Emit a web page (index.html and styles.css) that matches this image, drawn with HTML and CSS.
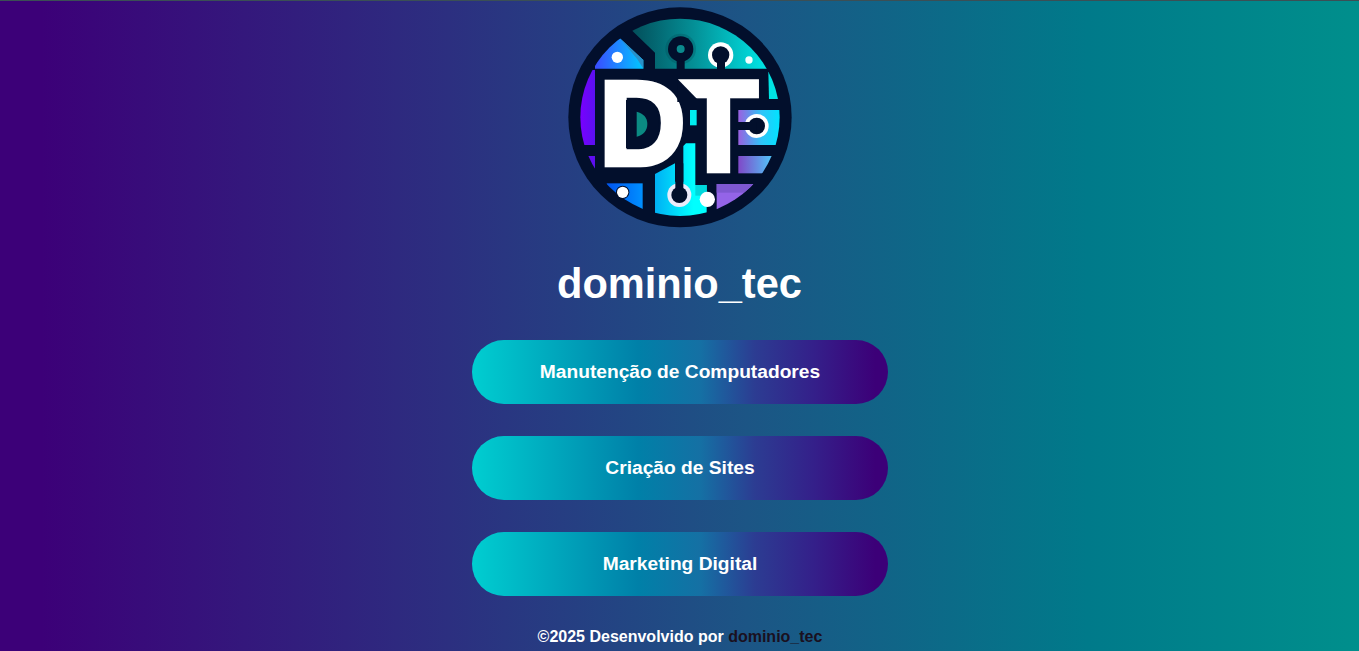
FILE: index.html
```html
<!DOCTYPE html>
<html lang="pt-BR">
<head>
  <meta charset="UTF-8" />
  <meta name="viewport" content="width=device-width, initial-scale=1.0" />
  <title>dominio_tec</title>
  <link rel="stylesheet" href="styles.css">
</head>
<body>
  <main class="page">
    <svg class="logo" viewBox="0 3 720 702" role="img" aria-label="Logo dominio_tec">
      <defs>
        <clipPath id="inner"><ellipse cx="360" cy="352" rx="299" ry="296" /></clipPath>
        <linearGradient id="tealTop" x1="220" x2="620" y1="0" y2="0" gradientUnits="userSpaceOnUse">
          <stop offset="0" stop-color="#03505c" />
          <stop offset="0.45" stop-color="#048f96" />
          <stop offset="1" stop-color="#00e6e6" />
        </linearGradient>
        <linearGradient id="house" x1="105" x2="250" y1="0" y2="0" gradientUnits="userSpaceOnUse">
          <stop offset="0" stop-color="#3a4cff" />
          <stop offset="1" stop-color="#00c8ff" />
        </linearGradient>
        <linearGradient id="violet" x1="60" x2="105" y1="0" y2="0" gradientUnits="userSpaceOnUse">
          <stop offset="0" stop-color="#7a00ff" />
          <stop offset="1" stop-color="#5a10f0" />
        </linearGradient>
        <linearGradient id="blue" x1="148" x2="248" y1="0" y2="0" gradientUnits="userSpaceOnUse">
          <stop offset="0" stop-color="#0058f0" />
          <stop offset="1" stop-color="#0090ff" />
        </linearGradient>
        <linearGradient id="cyan" x1="285" x2="400" y1="0" y2="0" gradientUnits="userSpaceOnUse">
          <stop offset="0" stop-color="#00b0f4" />
          <stop offset="1" stop-color="#00ffff" />
        </linearGradient>
        <linearGradient id="sideA" x1="535" x2="660" y1="0" y2="0" gradientUnits="userSpaceOnUse">
          <stop offset="0" stop-color="#9a60e0" />
          <stop offset="0.55" stop-color="#30c4f8" />
          <stop offset="1" stop-color="#00e4ff" />
        </linearGradient>
        <linearGradient id="sideB" x1="535" x2="638" y1="0" y2="0" gradientUnits="userSpaceOnUse">
          <stop offset="0" stop-color="#8048c8" />
          <stop offset="1" stop-color="#50c8fa" />
        </linearGradient>
      </defs>

      <ellipse cx="360" cy="352" rx="335" ry="330" fill="#020f2c" />

      <g clip-path="url(#inner)">
        <polygon points="212,88 285,158 285,206 640,206 640,20 212,20" fill="url(#tealTop)" />
        <circle cx="362" cy="147" r="46" fill="#03404c" opacity="0.25" />
        <polygon points="180,115 250,180 250,206 105,206 105,170 60,170" fill="url(#house)" />
        <polygon points="180,115 250,180 250,206 232,178" fill="#2a90c8" />
        <rect x="50" y="210" width="55" height="225" fill="url(#violet)" />
        <rect x="60" y="468" width="45" height="40" fill="url(#violet)" />
        <rect x="140" y="550" width="108" height="90" fill="url(#blue)" />
        <polygon points="285,522 345,490 345,660 285,660" fill="url(#cyan)" />
        <polygon points="370,438 378,430 406,430 406,555 440,555 440,660 345,660 345,545 370,545" fill="url(#cyan)" />
        <rect x="406" y="555" width="34" height="32" fill="#00d8dc" />
        <rect x="470" y="552" width="130" height="100" fill="#9464e8" />
        <rect x="470" y="552" width="110" height="26" fill="#7e58d0" />
        <rect x="535" y="330" width="130" height="105" fill="url(#sideA)" />
        <rect x="535" y="468" width="110" height="52" fill="url(#sideB)" />
        <polygon points="625,216 670,216 670,297 627,297" fill="#00e4e4" />
        <rect x="390" y="330" width="20" height="46" fill="#00eef0" />
      </g>

      <circle cx="172" cy="172" r="17" fill="#fff" />
      <circle cx="567" cy="180" r="11" fill="#f4ffff" />

      <rect x="350" y="150" width="24" height="60" fill="#020f2c" />
      <circle cx="362" cy="147" r="38" fill="#020f2c" />
      <circle cx="362" cy="147" r="12" fill="#0b8a8e" />

      <circle cx="482" cy="165" r="38" fill="#fff" />
      <circle cx="482" cy="165" r="26" fill="#020f2c" />
      <rect x="471" y="165" width="24" height="45" fill="#020f2c" />

      <circle cx="590" cy="378" r="36" fill="#fff" />
      <circle cx="590" cy="378" r="25" fill="#020f2c" />
      <rect x="530" y="366" width="60" height="24" fill="#020f2c" />

      <text class="logo-letter" stroke-width="14"><tspan x="117" y="496" font-size="360">D</tspan><tspan x="357" y="513" font-size="388">T</tspan></text>
      <polygon points="352,236 352,306 420,306" fill="#020f2c" />
      <path d="M198,300 H226 C272,300 296,330 296,372 C296,415 272,445 226,445 H198 Z" fill="#020f2c" />
      <path d="M230,335 C250,340 262,352 262,372 C262,392 250,405 230,410 Z" fill="#0b8a82" />

      <circle cx="358" cy="585" r="36" fill="#ecebfa" />
      <circle cx="358" cy="585" r="24" fill="#020f2c" />
      <rect x="346" y="490" width="24" height="90" fill="#020f2c" />
      <circle cx="442" cy="598" r="23" fill="#fff" />
      <circle cx="188" cy="577" r="20" fill="#020f2c" />
      <circle cx="188" cy="577" r="17" fill="#fff" />
    </svg>

    <h1 class="brand">dominio_tec</h1>

    <nav class="links">
      <a class="link-btn" href="#">Manutenção de Computadores</a>
      <a class="link-btn" href="#">Criação de Sites</a>
      <a class="link-btn" href="#">Marketing Digital</a>
    </nav>

    <footer class="foot">©2025 Desenvolvido por <a href="#">dominio_tec</a></footer>
  </main>
</body>
</html>
```

FILE: styles.css
```css
html, body {
  margin: 0;
  padding: 0;
  height: 100%;
}
body {
  font-family: "Liberation Sans", Arial, sans-serif;
  color: #fff;
  background: linear-gradient(90deg, #3c0078 0%, #3c0078 3%, #2c2f80 33%, #1c5585 55%, #007a8a 80%, #008f8c 100%);
  border-top: 1px solid #3b4f55;
  box-sizing: border-box;
  overflow: hidden;
}
.page {
  display: flex;
  flex-direction: column;
  align-items: center;
}
.logo {
  display: block;
  width: 240px;
  height: 234px;
}
.logo-letter {
  font-family: "Liberation Sans", Arial, sans-serif;
  font-weight: 700;
  fill: #fff;
  stroke: #fff;
}
.brand {
  margin: 25px 0 33px;
  font-size: 41.6px;
  line-height: 47px;
  font-weight: 700;
}
.links {
  display: flex;
  flex-direction: column;
  gap: 32px;
}
.link-btn {
  display: flex;
  align-items: center;
  justify-content: center;
  box-sizing: border-box;
  width: 416px;
  height: 64px;
  padding-left: 1px;
  border-radius: 32px;
  background: linear-gradient(90deg, #00ced1 0%, #0080a8 40%, #1570a4 55%, #2c3c92 68%, #34208a 82%, #3c0078 97%);
  color: #fff;
  font-size: 19.2px;
  font-weight: 700;
  text-decoration: none;
}
.foot {
  margin-top: 32px;
  padding-left: 1px;
  font-size: 16px;
  line-height: 18px;
  font-weight: 700;
}
.foot a {
  color: #1a1020;
  text-decoration: none;
}
```
